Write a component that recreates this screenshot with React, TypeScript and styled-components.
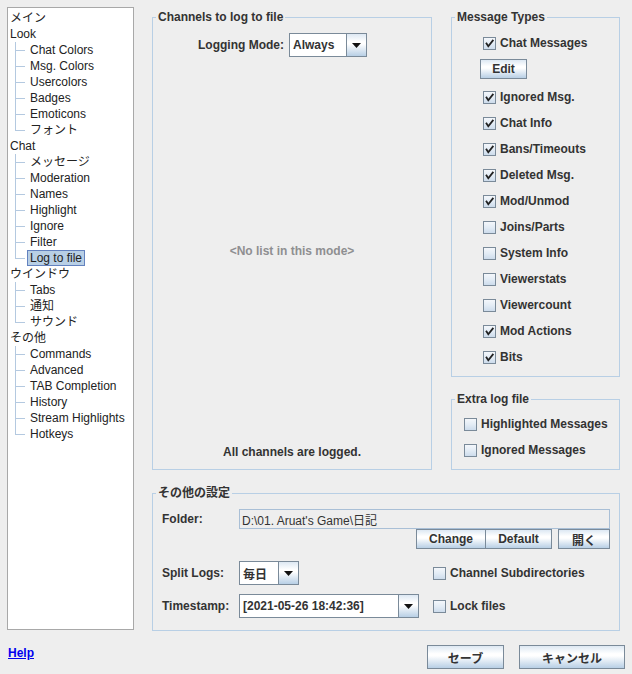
import React from 'react';
import styled, { createGlobalStyle } from 'styled-components';

const FONT = `"Liberation Sans", Arial, "Noto Sans CJK JP", sans-serif`;
const BTN_GRAD = 'linear-gradient(180deg, #dde8f3 0%, #ffffff 35%, #ffffff 45%, #b8cfe5 100%)';

const Global = createGlobalStyle`
  html, body { margin: 0; padding: 0; background: #eeeeee; }
  body { font-family: ${FONT}; font-size: 12px; color: #333333; }
  * { box-sizing: border-box; }
`;

const Window = styled.div`
  width: 632px;
  height: 674px;
  background: #eeeeee;
  padding: 7px 7px 0 7px;
  display: flex;
  flex-direction: column;
  overflow: hidden;
`;

const Main = styled.div`
  display: flex;
  gap: 18px;
  height: 624px;
`;

/* ---------- Tree ---------- */
const Tree = styled.div`
  width: 127px;
  height: 623px;
  background: #ffffff;
  border: 1px solid #a8a8a8;
  padding-top: 2px;
  display: flex;
  flex-direction: column;
`;

const Node = styled.div`
  display: flex;
  flex-direction: column;
`;

const Row = styled.div<{ $child?: boolean; $last?: boolean }>`
  position: relative;
  height: 16px;
  display: flex;
  align-items: center;
  ${(p) =>
    p.$child
      ? `
    &::before {
      content: '';
      position: absolute;
      left: 7px;
      top: 0;
      width: 1px;
      height: ${p.$last ? '9px' : '16px'};
      background: #b4c9e0;
    }
    &::after {
      content: '';
      position: absolute;
      left: 8px;
      top: 8px;
      width: 9px;
      height: 1px;
      background: #b4c9e0;
    }
  `
      : ''}
`;

const NodeLabel = styled.span<{ $child?: boolean; $selected?: boolean }>`
  display: inline-block;
  line-height: 14px;
  font-size: 12px;
  color: #222;
  white-space: nowrap;
  margin-left: ${(p) => (p.$child ? '19px' : '0')};
  padding: 0 ${(p) => (p.$child ? '2px' : '1px')};
  border: 1px solid ${(p) => (p.$selected ? '#6382bf' : 'transparent')};
  background: ${(p) => (p.$selected ? '#b8cfe5' : 'transparent')};
`;

const treeData: { label: string; children: string[] }[] = [
  { label: 'メイン', children: [] },
  { label: 'Look', children: ['Chat Colors', 'Msg. Colors', 'Usercolors', 'Badges', 'Emoticons', 'フォント'] },
  { label: 'Chat', children: ['メッセージ', 'Moderation', 'Names', 'Highlight', 'Ignore', 'Filter', 'Log to file'] },
  { label: 'ウインドウ', children: ['Tabs', '通知', 'サウンド'] },
  { label: 'その他', children: ['Commands', 'Advanced', 'TAB Completion', 'History', 'Stream Highlights', 'Hotkeys'] },
];

/* ---------- Titled groups ---------- */
const Right = styled.div`
  width: 468px;
  padding-top: 10px;
  display: flex;
  flex-direction: column;
  gap: 23px;
`;

const TopRow = styled.div`
  display: flex;
  gap: 19px;
`;

const SideColumn = styled.div`
  width: 169px;
  display: flex;
  flex-direction: column;
  gap: 22px;
`;

const Group = styled.section<{ $h: number; $w?: number }>`
  border: 1px solid #b8cfe5;
  height: ${(p) => p.$h}px;
  width: ${(p) => (p.$w ? `${p.$w}px` : 'auto')};
  display: flex;
  flex-direction: column;
`;

const GroupTitle = styled.div`
  align-self: flex-start;
  margin: -8px 0 0 3px;
  padding: 0 2px;
  height: 14px;
  line-height: 14px;
  background: #eeeeee;
  font-weight: bold;
  color: #333;
  white-space: nowrap;
`;

const BoldLabel = styled.span`
  font-weight: bold;
  color: #333;
  white-space: nowrap;
`;

/* ---------- Combo ---------- */
const ComboBox = styled.div<{ $w: number }>`
  display: flex;
  width: ${(p) => p.$w}px;
  height: 24px;
  border: 1px solid #7a8a99;
  background: #ffffff;
`;

const ComboValue = styled.div`
  flex: 1;
  display: flex;
  align-items: center;
  padding-left: 2px;
  font-weight: bold;
  color: #333;
  white-space: nowrap;
  border: 1px solid #ffffff;
`;

const ComboArrow = styled.div`
  width: 20px;
  border-left: 1px solid #7a8a99;
  background: ${BTN_GRAD};
  display: flex;
  align-items: center;
  justify-content: center;
`;

const Combo = ({ w, value }: { w: number; value: string }) => (
  <ComboBox $w={w}>
    <ComboValue>{value}</ComboValue>
    <ComboArrow>
      <svg width="9" height="5" viewBox="0 0 9 5">
        <polygon points="0,0 9,0 4.5,5" fill="#111" />
      </svg>
    </ComboArrow>
  </ComboBox>
);

/* ---------- Buttons ---------- */
const Button = styled.button<{ $w: number; $h?: number }>`
  width: ${(p) => p.$w}px;
  height: ${(p) => p.$h ?? 20}px;
  padding: 0;
  border: 1px solid #7a8a99;
  background: ${BTN_GRAD};
  font-family: ${FONT};
  font-size: 12px;
  font-weight: bold;
  color: #333;
  display: flex;
  align-items: center;
  justify-content: center;
  white-space: nowrap;
`;

/* ---------- Checkbox ---------- */
const CheckRow = styled.div<{ $indent?: number }>`
  display: flex;
  align-items: center;
  gap: 4px;
  height: 26px;
  margin-left: ${(p) => p.$indent ?? 0}px;
  font-weight: bold;
  color: #333;
  white-space: nowrap;
`;

const CheckBoxGlyph = styled.span`
  width: 13px;
  height: 13px;
  border: 1px solid #7a8a99;
  background: linear-gradient(180deg, #f4f7fb 0%, #e3ecf5 50%, #cddcec 100%);
  display: flex;
  align-items: center;
  justify-content: center;
  flex: none;
`;

const Check = ({ label, checked, indent }: { label: string; checked?: boolean; indent?: number }) => (
  <CheckRow $indent={indent}>
    <CheckBoxGlyph>
      {checked && (
        <svg width="11" height="11" viewBox="0 0 11 11">
          <path d="M2.5 5.5 L4.3 8.3 L8.8 2.6" fill="none" stroke="#222" strokeWidth="1.8" strokeLinecap="square" />
        </svg>
      )}
    </CheckBoxGlyph>
    <span>{label}</span>
  </CheckRow>
);

/* ---------- Channels panel ---------- */
const ModeRow = styled.div`
  display: flex;
  align-items: center;
  gap: 5px;
  margin-top: 9px;
  padding-left: 45px;
`;

const Placeholder = styled.div`
  flex: 1;
  display: flex;
  align-items: center;
  justify-content: center;
  font-weight: bold;
  color: #8e8f91;
`;

const Note = styled.div`
  text-align: center;
  line-height: 14px;
  margin-bottom: 10px;
  font-weight: bold;
  color: #333;
`;

/* ---------- Message types ---------- */
const TypeList = styled.div<{ $pt: number; $pl: number }>`
  display: flex;
  flex-direction: column;
  align-items: flex-start;
  padding: ${(p) => p.$pt}px 0 0 ${(p) => p.$pl}px;
`;

const EditWrap = styled.div`
  margin: 3px 0 5px 0;
`;

/* ---------- Other settings ---------- */
const SettingsGrid = styled.div`
  display: grid;
  grid-template-columns: 77px 194px 1fr;
  align-items: center;
  padding: 9px 9px 0 9px;
`;

const TextField = styled.div`
  grid-column: 2 / 4;
  height: 20px;
  border: 1px solid #a9bfd6;
  background: #eeeeee;
  display: flex;
  align-items: center;
  padding-left: 2px;
  color: #333;
  white-space: nowrap;
`;

const ButtonBar = styled.div`
  grid-column: 1 / -1;
  justify-self: end;
  display: flex;
  gap: 6px;
`;

const Joined = styled.div`
  display: flex;
  & > button + button {
    margin-left: -1px;
  }
`;

const GridCell = styled.div<{ $mt?: number }>`
  margin-top: ${(p) => p.$mt ?? 0}px;
  display: flex;
  align-items: center;
  height: 24px;
`;

/* ---------- Footer ---------- */
const Footer = styled.div`
  display: flex;
  align-items: flex-start;
  padding: 14px 0 0 1px;
`;

const HelpLink = styled.a`
  color: #0000ee;
  font-weight: bold;
  text-decoration: underline;
  line-height: 14px;
  margin-top: 1px;
`;

const FooterButtons = styled.div`
  margin-left: auto;
  display: flex;
  gap: 15px;
`;

export default function App() {
  return (
    <>
      <Global />
      <Window>
        <Main>
          <Tree>
            {treeData.map((n) => (
              <Node key={n.label}>
                <Row>
                  <NodeLabel>{n.label}</NodeLabel>
                </Row>
                {n.children.map((c, i) => (
                  <Row key={c} $child $last={i === n.children.length - 1}>
                    <NodeLabel $child $selected={c === 'Log to file'}>
                      {c}
                    </NodeLabel>
                  </Row>
                ))}
              </Node>
            ))}
          </Tree>

          <Right>
            <TopRow>
              <Group $h={453} $w={280}>
                <GroupTitle>Channels to log to file</GroupTitle>
                <ModeRow>
                  <BoldLabel>Logging Mode:</BoldLabel>
                  <Combo w={78} value="Always" />
                </ModeRow>
                <Placeholder>&lt;No list in this mode&gt;</Placeholder>
                <Note>All channels are logged.</Note>
              </Group>

              <SideColumn>
                <Group $h={360}>
                  <GroupTitle>Message Types</GroupTitle>
                  <TypeList $pt={6} $pl={28}>
                    <Check label="Chat Messages" checked indent={3} />
                    <EditWrap>
                      <Button $w={47}>Edit</Button>
                    </EditWrap>
                    <Check label="Ignored Msg." checked indent={3} />
                    <Check label="Chat Info" checked indent={3} />
                    <Check label="Bans/Timeouts" checked indent={3} />
                    <Check label="Deleted Msg." checked indent={3} />
                    <Check label="Mod/Unmod" checked indent={3} />
                    <Check label="Joins/Parts" indent={3} />
                    <Check label="System Info" indent={3} />
                    <Check label="Viewerstats" indent={3} />
                    <Check label="Viewercount" indent={3} />
                    <Check label="Mod Actions" checked indent={3} />
                    <Check label="Bits" checked indent={3} />
                  </TypeList>
                </Group>
                <Group $h={71}>
                  <GroupTitle>Extra log file</GroupTitle>
                  <TypeList $pt={5} $pl={12}>
                    <Check label="Highlighted Messages" />
                    <Check label="Ignored Messages" />
                  </TypeList>
                </Group>
              </SideColumn>
            </TopRow>

            <Group $h={138}>
              <GroupTitle>その他の設定</GroupTitle>
              <SettingsGrid>
                <BoldLabel>Folder:</BoldLabel>
                <TextField>D:\01. Aruat's Game\日記</TextField>
                <ButtonBar>
                  <Joined>
                    <Button $w={70}>Change</Button>
                    <Button $w={67}>Default</Button>
                  </Joined>
                  <Button $w={52}>開く</Button>
                </ButtonBar>

                <GridCell $mt={12}>
                  <BoldLabel>Split Logs:</BoldLabel>
                </GridCell>
                <GridCell $mt={12}>
                  <Combo w={60} value="毎日" />
                </GridCell>
                <GridCell $mt={12}>
                  <Check label="Channel Subdirectories" />
                </GridCell>

                <GridCell $mt={9}>
                  <BoldLabel>Timestamp:</BoldLabel>
                </GridCell>
                <GridCell $mt={9}>
                  <Combo w={180} value="[2021-05-26 18:42:36]" />
                </GridCell>
                <GridCell $mt={9}>
                  <Check label="Lock files" />
                </GridCell>
              </SettingsGrid>
            </Group>
          </Right>
        </Main>

        <Footer>
          <HelpLink href="#">Help</HelpLink>
          <FooterButtons>
            <Button $w={77} $h={24}>セーブ</Button>
            <Button $w={106} $h={24}>キャンセル</Button>
          </FooterButtons>
        </Footer>
      </Window>
    </>
  );
}
